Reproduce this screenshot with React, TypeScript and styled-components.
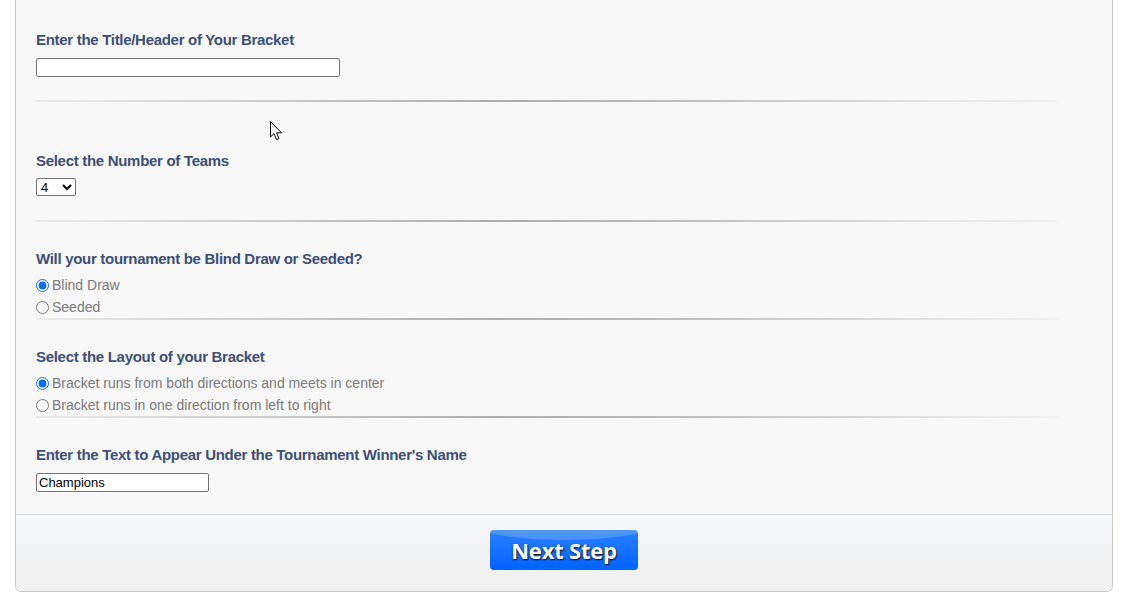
import React from "react";
import styled, { createGlobalStyle } from "styled-components";

const Global = createGlobalStyle`
  html, body { margin: 0; padding: 0; background: #ffffff; }
  body { font-family: "Liberation Sans", Arial, sans-serif; }
`;

const Page = styled.div`
  position: relative;
  width: 1124px;
  height: 598px;
  overflow: hidden;
`;

const Panel = styled.div`
  margin-left: 15px;
  width: 1096px;
  border: 1px solid #c9c9c9;
  border-top: none;
  border-radius: 0 0 6px 6px;
  background: #f8f8f8;
  overflow: hidden;
`;

const Body = styled.div`
  padding: 31px 52px 22px 20px;
`;

const Section = styled.div<{ $gapTop: number }>`
  display: flex;
  flex-direction: column;
  align-items: flex-start;
  padding-top: ${(p) => p.$gapTop}px;
`;

const Heading = styled.div`
  font-family: "Liberation Sans", Arial, sans-serif;
  font-weight: bold;
  font-size: 15px;
  line-height: 18px;
  letter-spacing: -0.3px;
  color: #3c4f76;
  margin-bottom: 8px;
`;

const TextInput = styled.input<{ $w: number }>`
  box-sizing: border-box;
  display: block;
  width: ${(p) => p.$w}px;
  height: 19px;
  margin: 1px 0 0;
  padding: 0 2px;
  border: 1px solid #767676;
  border-radius: 2px;
  background: #ffffff;
  font-family: "Liberation Sans", Arial, sans-serif;
  font-size: 13px;
  color: #000;
`;

const Select = styled.select`
  display: block;
  box-sizing: border-box;
  width: 40px;
  height: 18px;
  margin: 0;
  padding: 0;
  border: 1px solid #767676;
  border-radius: 2px;
  background: #ffffff;
  font-family: "Liberation Sans", Arial, sans-serif;
  font-size: 13px;
  color: #000;
`;

const Rule = styled.div<{ $top: number }>`
  margin-top: ${(p) => p.$top}px;
  width: 1024px;
  height: 2px;
  background-image: linear-gradient(
    to right,
    rgba(0, 0, 0, 0.06),
    rgba(0, 0, 0, 0.3) 45%,
    rgba(0, 0, 0, 0.25) 60%,
    rgba(0, 0, 0, 0.02)
  );
`;

const RadioList = styled.div`
  display: flex;
  flex-direction: column;
  margin-top: -2px;
`;

const RadioRow = styled.label`
  display: flex;
  align-items: center;
  height: 22px;
  font-family: "Liberation Sans", Arial, sans-serif;
  font-size: 14px;
  color: #7a7a7a;
`;

const Radio = styled.input`
  width: 13px;
  height: 13px;
  margin: 0 3px 0 0;
  accent-color: #0b6cf5;
`;

const Footer = styled.div`
  border-top: 1px solid #d7d8db;
  height: 77px;
  background: linear-gradient(to bottom, #f6f7f9, #f0f0f0);
  display: flex;
  justify-content: center;
  align-items: flex-start;
  padding-top: 15px;
  box-sizing: border-box;
`;

const NextButton = styled.button`
  position: relative;
  width: 148px;
  height: 40px;
  border: none;
  border-radius: 4px;
  overflow: hidden;
  background: linear-gradient(to bottom, #2a80ff, #0063ff);
  color: #ffffff;
  font-family: "Open Sans", "Liberation Sans", sans-serif;
  font-weight: 700;
  font-size: 22px;
  letter-spacing: -0.2px;
  text-shadow: 1px 1px 1px #1b1b3a, 0 1px 2px rgba(0, 0, 0, 0.5);
  cursor: pointer;
  padding: 0;
  &::before {
    content: "";
    position: absolute;
    left: -30px;
    right: -30px;
    top: -34px;
    height: 44px;
    border-radius: 50%;
    background: rgba(255, 255, 255, 0.18);
  }
`;

const ButtonLabel = styled.span`
  position: relative;
`;

const Cursor = styled.svg`
  position: absolute;
  left: 270px;
  top: 121px;
`;

export default function App() {
  return (
    <Page>
      <Global />
      <Panel>
        <Body>
          <Section $gapTop={0}>
            <Heading>Enter the Title/Header of Your Bracket</Heading>
            <TextInput $w={304} defaultValue="" />
          </Section>
          <Rule $top={23} />
          <Section $gapTop={50}>
            <Heading>Select the Number of Teams</Heading>
            <Select defaultValue="4">
              <option value="4">4</option>
              <option value="8">8</option>
              <option value="16">16</option>
              <option value="32">32</option>
            </Select>
          </Section>
          <Rule $top={24} />
          <Section $gapTop={28}>
            <Heading>Will your tournament be Blind Draw or Seeded?</Heading>
            <RadioList>
              <RadioRow>
                <Radio type="radio" name="draw" defaultChecked />
                Blind Draw
              </RadioRow>
              <RadioRow>
                <Radio type="radio" name="draw" />
                Seeded
              </RadioRow>
            </RadioList>
          </Section>
          <Rule $top={0} />
          <Section $gapTop={28}>
            <Heading>Select the Layout of your Bracket</Heading>
            <RadioList>
              <RadioRow>
                <Radio type="radio" name="layout" defaultChecked />
                Bracket runs from both directions and meets in center
              </RadioRow>
              <RadioRow>
                <Radio type="radio" name="layout" />
                Bracket runs in one direction from left to right
              </RadioRow>
            </RadioList>
          </Section>
          <Rule $top={0} />
          <Section $gapTop={28}>
            <Heading>Enter the Text to Appear Under the Tournament Winner's Name</Heading>
            <TextInput $w={173} defaultValue="Champions" />
          </Section>
        </Body>
        <Footer>
          <NextButton>
            <ButtonLabel>Next Step</ButtonLabel>
          </NextButton>
        </Footer>
      </Panel>
      <Cursor width="13" height="20" viewBox="0 0 13 20">
        <path
          d="M0.5 0.5 L0.5 16 L4 12.6 L6.6 18.6 L9 17.6 L6.5 11.8 L11.5 11.8 Z"
          fill="#ffffff"
          stroke="#000000"
          strokeWidth="1"
          strokeLinejoin="miter"
        />
      </Cursor>
    </Page>
  );
}
